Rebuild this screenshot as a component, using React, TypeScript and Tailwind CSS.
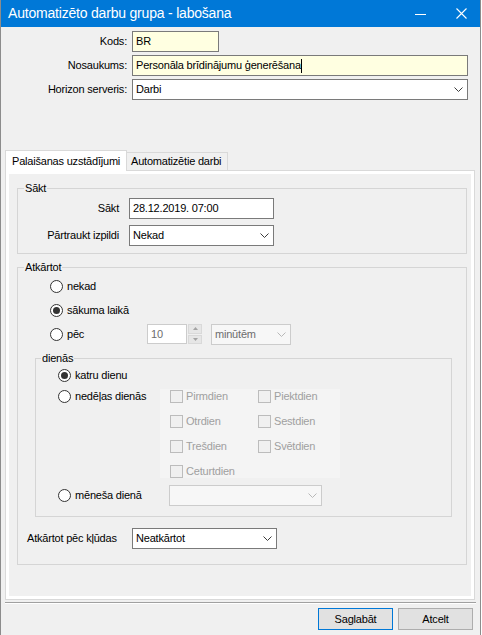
import React from "react";

function Chevron({ light }: { light?: boolean }) {
  return (
    <svg width="9" height="5" viewBox="0 0 9 5" className="shrink-0">
      <path
        d="M0.5 0.5 L4.5 4.5 L8.5 0.5"
        fill="none"
        stroke={light ? "#b8b8b8" : "#3c3c3c"}
        strokeWidth="1"
      />
    </svg>
  );
}

function Select({
  value,
  className,
  disabled,
}: {
  value?: string;
  className: string;
  disabled?: boolean;
}) {
  return (
    <div
      className={`flex items-center justify-between h-[21px] pl-[3px] pr-[4px] border ${
        disabled
          ? "border-[#cccccc] bg-[#f7f7f7] text-[#6d6d6d]"
          : "border-[#7a7a7a] bg-white"
      } ${className}`}
    >
      <span>{value}</span>
      <Chevron light={disabled} />
    </div>
  );
}

function Radio({ checked, label }: { checked?: boolean; label: string }) {
  return (
    <div className="flex items-center">
      <span className="w-[13px] h-[13px] rounded-full border border-[#333333] bg-white flex items-center justify-center shrink-0">
        {checked && <span className="w-[7px] h-[7px] rounded-full bg-[#333333]" />}
      </span>
      <span className="ml-[4px]">{label}</span>
    </div>
  );
}

function Check({ label }: { label: string }) {
  return (
    <div className="flex items-center h-[14px]">
      <span className="w-[13px] h-[13px] border border-[#bcbcbc] bg-[#f0f0f0] shrink-0" />
      <span className="ml-[3px] text-[#a0a0a0]">{label}</span>
    </div>
  );
}

function Legend({ children }: { children: React.ReactNode }) {
  return <legend className="ml-[6px] px-[1px] leading-[15px]">{children}</legend>;
}

export default function App() {
  return (
    <div className="w-[482px] h-[635px] bg-white">
      <div className="w-[481px] h-[635px] flex flex-col bg-[#f0f0f0] border-x border-[#8c8c8c] text-[11px] tracking-[-0.2px] text-black font-['Liberation_Sans',Arial,sans-serif] leading-[15px]">
        {/* title bar */}
        <div className="h-[27px] shrink-0 bg-[#0078d7] flex items-center text-white">
          <span className="pl-[7px] flex-1 text-[14px] tracking-[-0.2px]">
            Automatizēto darbu grupa - labošana
          </span>
          <svg width="11" height="11" viewBox="0 0 11 11">
            <path d="M0 6.5 H11" stroke="white" strokeWidth="1" />
          </svg>
          <svg width="11" height="11" viewBox="0 0 11 11" className="ml-[30px] mr-[13px]">
            <path d="M0.5 0.5 L10.5 10.5 M10.5 0.5 L0.5 10.5" stroke="white" strokeWidth="1.1" />
          </svg>
        </div>

        {/* header form */}
        <div className="pt-[4px] pr-[12px] grid grid-cols-[126px_1fr] gap-x-[5px] gap-y-[3px] items-center">
          <span className="text-right">Kods:</span>
          <div className="w-[87px] h-[21px] border border-[#7a7a7a] bg-[#ffffe1] pl-[3px] flex items-center">
            BR
          </div>
          <span className="text-right">Nosaukums:</span>
          <div className="h-[21px] border border-[#7a7a7a] bg-[#ffffe1] pl-[3px] flex items-center">
            <span>Personāla brīdinājumu ģenerēšana</span>
            <span className="w-px h-[14px] bg-black" />
          </div>
          <span className="text-right">Horizon serveris:</span>
          <Select value="Darbi" className="w-full" />
        </div>

        {/* tabs */}
        <div className="mt-[50px] ml-[4px] w-[470px] flex flex-col">
          <div className="flex items-end h-[20px]">
            <div className="relative z-10 -mb-px h-[21px] w-[122px] bg-white border border-b-0 border-[#d9d9d9] pl-[6px] flex items-center">
              Palaišanas uzstādījumi
            </div>
            <div className="h-[18px] w-[101px] bg-[#f0f0f0] border border-b-0 border-l-0 border-[#d9d9d9] pl-[4px] flex items-center">
              Automatizētie darbi
            </div>
          </div>

          <div className="h-[430px] border border-[#d9d9d9] bg-white p-[3px] flex">
            <div className="flex-1 bg-[#f0f0f0] flex flex-col">
              {/* Sākt */}
              <fieldset className="mt-[7px] ml-[8px] w-[450px] border border-[#d5d5d5] pb-[7px]">
                <Legend>Sākt</Legend>
                <div className="mt-[2px] flex flex-col gap-[6px]">
                  <div className="flex items-center">
                    <span className="w-[101px] text-right">Sākt</span>
                    <div className="ml-[10px] w-[145px] h-[21px] border border-[#7a7a7a] bg-white pl-[3px] flex items-center">
                      28.12.2019. 07:00
                    </div>
                  </div>
                  <div className="flex items-center">
                    <span className="w-[101px] text-right">Pārtraukt izpildi</span>
                    <Select value="Nekad" className="ml-[10px] w-[145px]" />
                  </div>
                </div>
              </fieldset>

              {/* Atkārtot */}
              <fieldset className="mt-[6px] ml-[8px] w-[450px] border border-[#d5d5d5] pb-[15px]">
                <Legend>Atkārtot</Legend>
                <div className="mt-[1px] pl-[32px] flex flex-col gap-[4px]">
                  <div className="h-[20px] flex items-center">
                    <Radio label="nekad" />
                  </div>
                  <div className="h-[20px] flex items-center">
                    <Radio checked label="sākuma laikā" />
                  </div>
                  <div className="h-[20px] flex items-center">
                    <div className="w-[97px]">
                      <Radio label="pēc" />
                    </div>
                    <div className="w-[40px] h-[20px] border border-[#cccccc] bg-white text-[#6d6d6d] pl-[3px] flex items-center">
                      10
                    </div>
                    <div className="ml-[1px] w-[14px] h-[20px] flex flex-col gap-px">
                      <div className="flex-1 bg-[#e6e6e6] border border-[#d9d9d9] flex items-center justify-center">
                        <svg width="5" height="3" viewBox="0 0 5 3">
                          <path d="M0 3 L2.5 0 L5 3 Z" fill="#a3a3a3" />
                        </svg>
                      </div>
                      <div className="flex-1 bg-[#e6e6e6] border border-[#d9d9d9] flex items-center justify-center">
                        <svg width="5" height="3" viewBox="0 0 5 3">
                          <path d="M0 0 L2.5 3 L5 0 Z" fill="#a3a3a3" />
                        </svg>
                      </div>
                    </div>
                    <Select disabled value="minūtēm" className="ml-[9px] w-[80px] h-[20px]" />
                  </div>
                </div>

                {/* dienās */}
                <fieldset className="mt-[7px] ml-[17px] w-[417px] border border-[#d5d5d5] pb-[10px]">
                  <legend className="ml-[5px] px-[1px] leading-[15px]">dienās</legend>
                  <div className="pl-[22px] flex flex-col">
                    <div className="h-[18px] flex items-center">
                      <Radio checked label="katru dienu" />
                    </div>
                    <div className="mt-[5px] flex items-start">
                      <div className="w-[102px] h-[14px] flex items-center">
                        <Radio label="nedēļas dienās" />
                      </div>
                      <div className="w-[180px] bg-[#f4f4f4] pl-[10px] grid grid-cols-[88px_1fr] gap-y-[11px]">
                        <Check label="Pirmdien" />
                        <Check label="Piektdien" />
                        <Check label="Otrdien" />
                        <Check label="Sestdien" />
                        <Check label="Trešdien" />
                        <Check label="Svētdien" />
                        <Check label="Ceturtdien" />
                      </div>
                    </div>
                    <div className="mt-[7px] h-[21px] flex items-center">
                      <div className="w-[111px]">
                        <Radio label="mēneša dienā" />
                      </div>
                      <Select disabled className="w-[153px]" />
                    </div>
                  </div>
                </fieldset>

                <div className="mt-[11px] pl-[9px] flex items-center">
                  <span className="w-[105px]">Atkārtot pēc kļūdas</span>
                  <Select value="Neatkārtot" className="w-[145px]" />
                </div>
              </fieldset>
            </div>
          </div>
        </div>

        {/* separator */}
        <div className="mt-[2px] mx-[4px] h-[2px] border-t border-[#a0a0a0] bg-white" />

        {/* buttons */}
        <div className="mt-[4px] pr-[7px] flex justify-end gap-[5px]">
          <button className="w-[75px] h-[22px] bg-[#e1e1e1] border border-[#0078d7]">
            Saglabāt
          </button>
          <button className="w-[75px] h-[22px] bg-[#e1e1e1] border border-[#adadad]">
            Atcelt
          </button>
        </div>
      </div>
    </div>
  );
}
